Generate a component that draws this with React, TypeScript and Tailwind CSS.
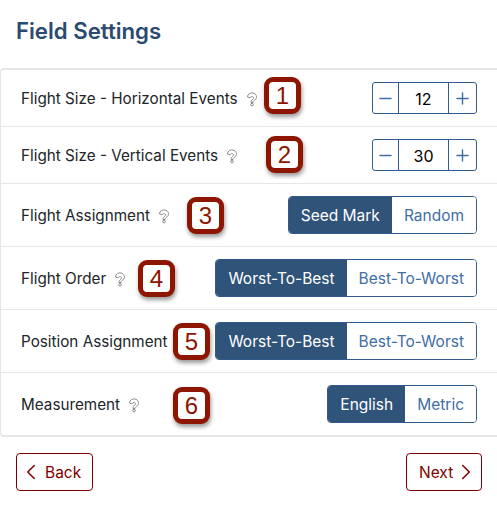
import { ChevronLeft, ChevronRight, Minus, Plus } from 'lucide-react'

const ROWS = [
  { label: 'Flight Size - Horizontal Events', badge: 1, badgeClass: 'left-[263px] top-[7px]', stepper: '12', height: 'h-[56px]' },
  { label: 'Flight Size - Vertical Events', badge: 2, badgeClass: 'left-[265px] top-[9px]', stepper: '30', height: 'h-[57px]' },
  { label: 'Flight Assignment', badge: 3, badgeClass: 'left-[186px] top-[13px]', options: ['Seed Mark', 'Random'], height: 'h-[63px]' },
  { label: 'Flight Order', badge: 4, badgeClass: 'left-[137px] top-[13px]', options: ['Worst-To-Best', 'Best-To-Worst'], height: 'h-[63px]' },
  { label: 'Position Assignment', badge: 5, badgeClass: 'left-[172px] top-[13px]', options: ['Worst-To-Best', 'Best-To-Worst'], height: 'h-[63px]' },
  { label: 'Measurement', badge: 6, badgeClass: 'left-[172px] top-[14px]', options: ['English', 'Metric'], height: 'h-[63px]' },
]

function HelpIcon() {
  return (
    <svg width="12" height="15" viewBox="0 0 12 15" fill="none" stroke="#8a8a8a" strokeWidth="1" className="ml-[8px]">
      <path d="M1.5 5a4.5 4 0 1 1 7 3.2C7.4 9 7 9.4 7 10.5H5C5 8.8 5.6 8 6.7 7.2 7.6 6.6 8 6 7.4 5.2 6.6 4.2 4.6 4.4 4 5.8Z" />
      <circle cx="6" cy="12.6" r="1.3" />
    </svg>
  )
}

function Badge({ value, className }: { value: number; className: string }) {
  return (
    <div className={`absolute ${className} flex h-[37px] w-[37px] items-center justify-center rounded-[9px] border-[5px] border-[#8e1500] bg-white font-['Liberation_Sans',sans-serif] text-[24px] leading-none text-[#8e1500] shadow-[1px_3px_4px_rgba(0,0,0,0.4)]`}>
      {value}
    </div>
  )
}

function Stepper({ value }: { value: string }) {
  return (
    <div className="flex h-[32px] w-[105px] rounded-[3px] border border-[#2f5b8f] text-[#3f6ea5]">
      <div className="flex w-[26px] items-center justify-center border-r border-[#2f5b8f]">
        <Minus size={19} strokeWidth={1.8} />
      </div>
      <div className="flex flex-1 items-center justify-center pt-[1px] text-[16px] text-black">{value}</div>
      <div className="flex w-[28px] items-center justify-center border-l border-[#2f5b8f]">
        <Plus size={19} strokeWidth={1.8} />
      </div>
    </div>
  )
}

function Toggle({ options }: { options: string[] }) {
  return (
    <div className="flex h-[38px] overflow-hidden rounded-[4px] border border-[#2f5b8f] text-[15.5px]">
      <div className="flex items-center bg-[#2f5379] px-[12px] pt-[1px] text-white">{options[0]}</div>
      <div className="flex items-center bg-white px-[12px] pt-[1px] text-[#3f6ea5]">{options[1]}</div>
    </div>
  )
}

export default function App() {
  return (
    <div className="h-[506px] w-[497px] overflow-hidden bg-white font-['Inter',sans-serif] text-[#212529]">
      <h1 className="flex h-[68px] items-start pl-[16px] pt-[16px] text-[22.2px] font-semibold leading-[30px] text-[#2a4a6f]">Field Settings</h1>
      <div className="rounded-l-[4px] border-y-2 border-l border-[#e6e6e6]">
        {ROWS.map((row, index) => (
          <div
            key={row.label}
            className={`relative flex items-center justify-between pl-[20px] pr-[20px] ${row.height} ${index > 0 ? 'border-t border-[#e6e6e6]' : ''}`}
          >
            <div className="flex items-center pt-[2px] text-[15.25px] leading-none">
              {row.label}
              <HelpIcon />
            </div>
            <Badge value={row.badge} className={row.badgeClass} />
            {row.stepper ? <Stepper value={row.stepper} /> : <Toggle options={row.options ?? []} />}
          </div>
        ))}
      </div>
      <div className="flex justify-between pl-[16px] pr-[15px] pt-[16px] text-[15.5px] text-[#800000]">
        <button className="flex h-[38px] w-[77px] items-center justify-start gap-[1px] rounded-[4px] border border-[#800000] pl-[1px]">
          <ChevronLeft size={26} strokeWidth={1.4} />
          <span className="pt-[1px]">Back</span>
        </button>
        <button className="flex h-[38px] w-[76px] items-center justify-start rounded-[4px] border border-[#800000] pl-[12px]">
          <span className="pt-[1px]">Next</span>
          <ChevronRight size={26} strokeWidth={1.4} />
        </button>
      </div>
    </div>
  )
}
